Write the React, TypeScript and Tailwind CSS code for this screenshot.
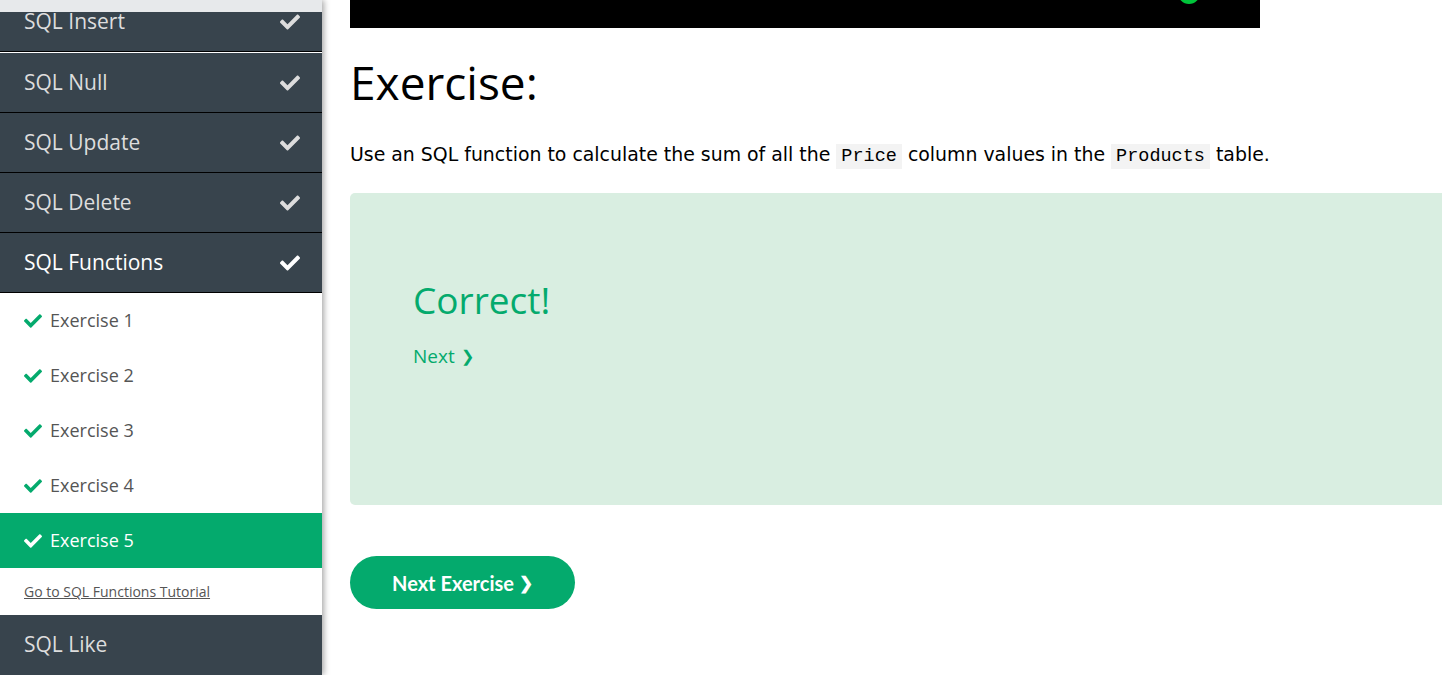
import React from 'react';
import { FaCheck } from 'react-icons/fa';

const topics = ['SQL Null', 'SQL Update', 'SQL Delete'];
const exercises = ['Exercise 1', 'Exercise 2', 'Exercise 3', 'Exercise 4', 'Exercise 5'];

function TopicRow({ name, active = false }: { name: string; active?: boolean }) {
  return (
    <div className="flex h-[60px] items-center justify-between border-b border-black bg-[#38444d] pl-[24px] pr-[22px]">
      <span className={`text-[21px] ${active ? 'text-white' : 'text-[#dddddd]'}`}>{name}</span>
      <FaCheck className={active ? 'text-white' : 'text-[#dddddd]'} size={20} />
    </div>
  );
}

function Sidebar() {
  return (
    <aside className="relative z-10 flex w-[322px] shrink-0 flex-col shadow-[2px_0_6px_rgba(0,0,0,0.35)] font-['Open_Sans',sans-serif]">
      <div className="h-[12px] bg-[#e7e9eb]" />
      <div className="h-[41px] overflow-hidden">
        <div className="-mt-[20px]">
          <TopicRow name="SQL Insert" />
        </div>
      </div>
      {topics.map((t) => (
        <TopicRow key={t} name={t} />
      ))}
      <TopicRow name="SQL Functions" active />

      <div className="bg-white">
        {exercises.map((ex, i) => {
          const current = i === exercises.length - 1;
          return (
            <div
              key={ex}
              className={`flex h-[55px] items-center gap-[8px] pl-[24px] text-[18px] ${
                current ? 'bg-[#04aa6d] text-white' : 'text-[#555555]'
              }`}
            >
              <FaCheck className={current ? 'text-white' : 'text-[#04aa6d]'} size={18} />
              <span>{ex}</span>
            </div>
          );
        })}
        <div className="flex h-[47px] items-center pl-[24px]">
          <a href="#" className="text-[14px] text-[#555555] underline">
            Go to SQL Functions Tutorial
          </a>
        </div>
      </div>

      <div className="flex h-[60px] items-center bg-[#38444d] pl-[24px]">
        <span className="text-[21px] text-[#dddddd]">SQL Like</span>
      </div>
    </aside>
  );
}

export default function App() {
  return (
    <div className="flex h-[675px] w-[1442px] overflow-hidden bg-white">
      <Sidebar />

      <main className="flex min-w-0 flex-1 flex-col pl-[28px]">
        <div className="relative h-[28px] w-[910px] shrink-0 overflow-hidden bg-black">
          <div className="absolute left-[828px] top-[-18px] h-[22px] w-[22px] rounded-full bg-[#00c43a]" />
        </div>

        <h1 className="mt-[22px] text-[46px] font-normal leading-[64px] text-black font-['Open_Sans',sans-serif]">
          Exercise:
        </h1>

        <p className="mt-[27px] whitespace-nowrap text-[18.9px] leading-[26px] text-black font-['DejaVu_Sans',sans-serif]">
          Use an SQL function to calculate the sum of all the{' '}
          <code className="bg-[#f3f3f3] px-[5px] py-[2px] text-[18.5px] font-['Liberation_Mono',monospace]">Price</code>{' '}
          column values in the{' '}
          <code className="bg-[#f3f3f3] px-[5px] py-[2px] text-[18.5px] font-['Liberation_Mono',monospace]">Products</code>{' '}
          table.
        </p>

        <div className="mt-[23px] h-[312px] w-[1200px] shrink-0 rounded-l-[5px] bg-[#d9eee1] pl-[63px] pt-[82px] font-['Open_Sans',sans-serif]">
          <div className="text-[37px] leading-[50px] text-[#04aa6d]">Correct!</div>
          <a href="#" className="mt-[17px] inline-flex items-center gap-[6px] text-[19px] text-[#04aa6d]">
            Next <span className="text-[16px]">❯</span>
          </a>
        </div>

        <div className="mt-[51px]">
          <button className="flex h-[53px] w-[225px] items-center justify-center gap-[5px] rounded-full bg-[#04aa6d] text-[20px] font-bold text-white font-['Lato',sans-serif]">
            Next Exercise <span className="text-[17px]">❯</span>
          </button>
        </div>
      </main>
    </div>
  );
}
